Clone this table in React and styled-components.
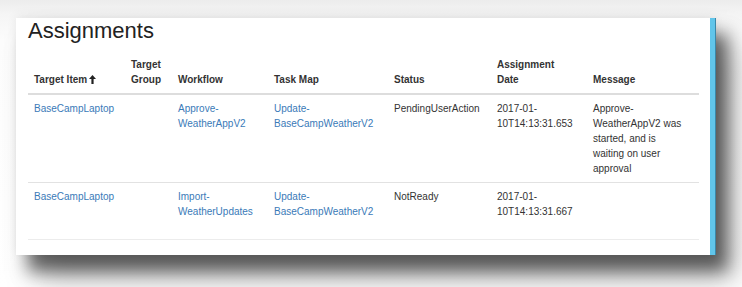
import React from 'react';
import styled, { createGlobalStyle } from 'styled-components';

const GlobalStyle = createGlobalStyle`
  html, body {
    margin: 0;
    padding: 0;
    background: #fff;
  }
  body {
    font-family: "Liberation Sans", Arial, sans-serif;
  }
`;

const Page = styled.div`
  width: 742px;
  height: 287px;
  overflow: hidden;
  box-sizing: border-box;
  padding: 18px 0 0 16px;
  background: linear-gradient(to bottom, #ececec 0px, #f5f5f5 14px, #fcfcfc 40px, #fff 100%);
`;

const Card = styled.div`
  width: 699px;
  box-sizing: border-box;
  background: #fff;
  padding: 0 11px 15px 12px;
  border-right: 5px solid #61c5ea;
  box-shadow:
    1px 0 0 #3b87a8,
    12px 16px 16px rgba(0, 0, 0, 0.55),
    20px 24px 30px rgba(0, 0, 0, 0.25),
    0 -3px 10px rgba(0, 0, 0, 0.06);
`;

const Title = styled.h2`
  margin: 0 0 7px 0;
  font-size: 22px;
  line-height: 26px;
  font-weight: normal;
  color: #222;
`;

const Table = styled.table`
  width: 671px;
  table-layout: fixed;
  border-collapse: collapse;
  font-size: 10px;
  line-height: 15px;
  color: #333;
`;

const Head = styled.th`
  text-align: left;
  vertical-align: bottom;
  font-weight: bold;
  padding: 6px 6px;
  border-bottom: 2px solid #dddddd;
  color: #333;
`;

const Row = styled.tr`
  height: ${p => p.$minHeight || 'auto'};
`;

const Cell = styled.td`
  vertical-align: top;
  padding: 6px ${p => (p.$narrow ? '11px' : '6px')} 6px 6px;
  border-top: 1px solid #e2e2e2;
  ${p => p.$last && 'border-bottom: 1px solid #ececec;'}
`;

const Link = styled.a`
  color: #3a7ab8;
  text-decoration: none;
`;

const SortArrow = styled.svg`
  width: 7px;
  height: 9px;
  margin-left: 2px;
  vertical-align: -1px;
`;

const columns = [
  { key: 'item', width: 97 },
  { key: 'group', width: 47 },
  { key: 'workflow', width: 96 },
  { key: 'taskmap', width: 120 },
  { key: 'status', width: 103 },
  { key: 'date', width: 96 },
  { key: 'message', width: 112 },
];

const rows = [
  {
    item: 'BaseCampLaptop',
    workflow: 'Approve-WeatherAppV2',
    taskmap: 'Update-BaseCampWeatherV2',
    status: 'PendingUserAction',
    date: ['2017-01-', '10T14:13:31.653'],
    message: 'Approve-WeatherAppV2 was started, and is waiting on user approval',
  },
  {
    item: 'BaseCampLaptop',
    workflow: 'Import-WeatherUpdates',
    taskmap: 'Update-BaseCampWeatherV2',
    status: 'NotReady',
    date: ['2017-01-', '10T14:13:31.667'],
    message: '',
    minHeight: '57px',
  },
];

export default function App() {
  return (
    <Page>
      <GlobalStyle />
      <Card>
        <Title>Assignments</Title>
        <Table>
          <colgroup>
            {columns.map(c => <col key={c.key} style={{ width: c.width }} />)}
          </colgroup>
          <thead>
            <tr>
              <Head>
                Target Item
                <SortArrow viewBox="0 0 7 9">
                  <path d="M3.5 0 L7 4 L4.6 4 L4.6 9 L2.4 9 L2.4 4 L0 4 Z" fill="#222" />
                </SortArrow>
              </Head>
              <Head>Target Group</Head>
              <Head>Workflow</Head>
              <Head>Task Map</Head>
              <Head>Status</Head>
              <Head>Assignment<br />Date</Head>
              <Head>Message</Head>
            </tr>
          </thead>
          <tbody>
            {rows.map((r, i) => {
              const last = i === rows.length - 1;
              return (
                <Row key={i} $minHeight={r.minHeight}>
                  <Cell $last={last}><Link>{r.item}</Link></Cell>
                  <Cell $last={last}></Cell>
                  <Cell $last={last}><Link>{r.workflow}</Link></Cell>
                  <Cell $last={last}><Link>{r.taskmap}</Link></Cell>
                  <Cell $last={last}>{r.status}</Cell>
                  <Cell $last={last}>{r.date[0]}<wbr />{r.date[1]}</Cell>
                  <Cell $last={last} $narrow>{r.message}</Cell>
                </Row>
              );
            })}
          </tbody>
        </Table>
      </Card>
    </Page>
  );
}
